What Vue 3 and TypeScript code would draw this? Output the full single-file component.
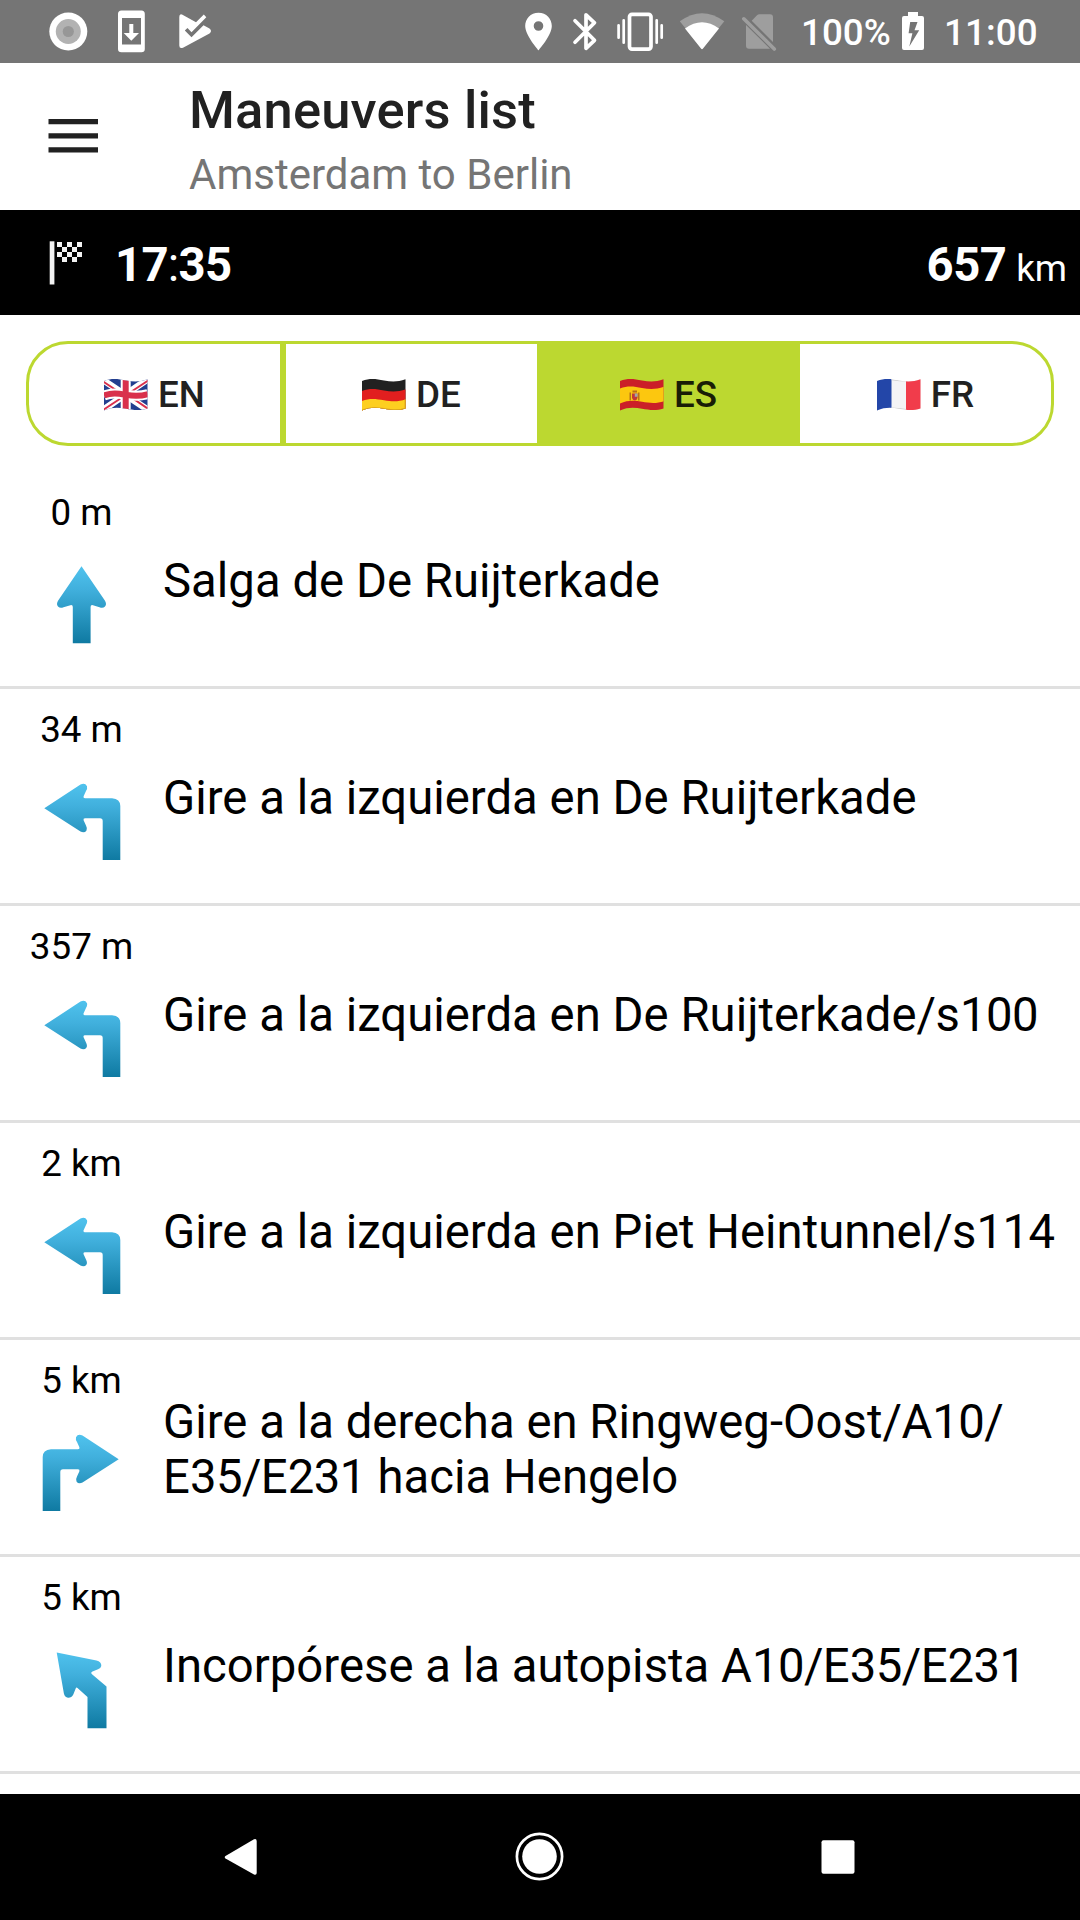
<script setup lang="ts">
type Turn = 'straight' | 'left' | 'right' | 'slight-left'
type Lang = 'EN' | 'DE' | 'ES' | 'FR'

interface Maneuver {
  distance: string
  turn: Turn
  lines: string[]
}

const langs: Lang[] = ['EN', 'DE', 'ES', 'FR']
const active: Lang = 'ES'

// Splits a line so that runs of digits and slashes can be set tighter.
const pieces = (line: string): string[] => line.split(/([0-9/]+)/).filter(Boolean)
const isTight = (piece: string): boolean => /^[0-9/]/.test(piece)

const leftPath =
  'M44.3 119.3L80.5 95.6Q85 93.500 87 97.300Q87.600 99.500 86 102L83.600 107.300Q83 109.300 85 109.300H112Q120.300 110 120.300 117V171H102.700V132Q102.700 129.300 100 129.300H85Q83 129.300 83.600 131.300L86 136.500Q87.600 139.500 86.500 141.500Q84.500 144.500 80.500 142.600Z'

const paths: Record<Turn, string> = {
  straight:
    'M81.500 94.300L105 128.800Q107 132.500 105 134.500Q103 136.700 99.500 135.300L93 133.200Q90.600 132.600 90.600 135V171.300H72.800V135Q72.800 132.600 70.400 133.200L63.500 135.300Q60 136.700 58 134.500Q56 132.500 58 128.800Z',
  left: leftPath,
  right: leftPath,
  'slight-left':
    'M56.700 95.500L96.500 103.500Q101.500 104.800 101.300 109Q100.800 111.300 98 112.300L92.500 114.500Q90.300 115.700 92 117.300L106.500 129.500V171.300H87.500V140L77.500 131Q76.300 129.800 75.500 132L73.300 137.500Q71.500 141 68 140.800Q64.800 140.300 63.900 136.500Z',
}

const maneuvers: Maneuver[] = [
  { distance: '0 m', turn: 'straight', lines: ['Salga de De Ruijterkade'] },
  { distance: '34 m', turn: 'left', lines: ['Gire a la izquierda en De Ruijterkade'] },
  { distance: '357 m', turn: 'left', lines: ['Gire a la izquierda en De Ruijterkade/s100'] },
  { distance: '2 km', turn: 'left', lines: ['Gire a la izquierda en Piet Heintunnel/s114'] },
  { distance: '5 km', turn: 'right', lines: ['Gire a la derecha en Ringweg-Oost/A10/', 'E35/E231 hacia Hengelo'] },
  { distance: '5 km', turn: 'slight-left', lines: ['Incorpórese a la autopista A10/E35/E231'] },
]
</script>

<template>
  <div class="screen">
    <svg class="defs" width="0" height="0">
      <defs>
        <linearGradient id="arrow" gradientUnits="userSpaceOnUse" x1="0" y1="94" x2="0" y2="171">
          <stop offset="0" stop-color="#50c3ee" />
          <stop offset="0.3" stop-color="#41b0dd" />
          <stop offset="1" stop-color="#0f7aa2" />
        </linearGradient>
        <clipPath id="wave">
          <path d="M0 2C8 -1 14 0 22 1.500S36 3 43.500 0.300V29.500C36 32 29 31 22 29.800S8 28 0 31.500Z" />
        </clipPath>
      </defs>
    </svg>

    <header class="status">
      <div class="status-left">
        <svg width="40" height="44" viewBox="48 10 40 44">
          <circle cx="68.300" cy="31.500" r="19" fill="#fff" />
          <circle cx="68.300" cy="31.500" r="12.500" fill="#b2b2b2" />
          <circle cx="68.300" cy="31.500" r="5.600" fill="#979797" />
        </svg>
        <svg width="28" height="44" viewBox="117 10 28 44">
          <path fill="#fff" fill-rule="evenodd" d="M121.500 10.500H141.500Q144.800 10.500 144.800 14V49Q144.800 52.300 141.500 52.300H121.500Q118 52.300 118 49V14Q118 10.500 121.500 10.500ZM122 18V44.500H141V18Z" />
          <path fill="#fff" d="M129.300 24H133.300V33H139L131.300 40.700L123.700 33H129.300Z" />
        </svg>
        <svg width="34" height="44" viewBox="178 10 34 44">
          <path fill="#fff" d="M182 14.500L196 22.300L203.800 14.600L206.300 17.200L191.500 32.200L187.500 28L184.800 30.600L191.500 37.300L203.500 25.300L209.500 28.600Q212.500 31 209.500 33.400L183 47.700Q179.300 49 179.300 45.500V17Q179.300 13.500 182 14.500Z" />
        </svg>
      </div>
      <div class="status-right">
        <svg width="27" height="40" viewBox="525 12 27 40">
          <path fill="#fff" fill-rule="evenodd" d="M538.500 12.700C530.500 12.700 525.200 18.700 525.200 26C525.200 35.500 538.500 50.300 538.500 50.300S551.800 35.500 551.800 26C551.800 18.700 546.500 12.700 538.500 12.700ZM538.500 21.200A4.800 4.800 0 1 1 538.500 30.800A4.800 4.800 0 1 1 538.500 21.200Z" />
        </svg>
        <svg class="bt" width="26" height="40" viewBox="572 12 26 40">
          <path fill="none" stroke="#fff" stroke-width="3.700" stroke-linejoin="round" stroke-linecap="round" d="M575 20.800L594.500 40.300L586 48.300V14.800L594.500 22.800L575 42.300" />
        </svg>
        <svg class="vib" width="48" height="40" viewBox="616 12 48 40">
          <rect x="629.500" y="14.300" width="21.500" height="34.800" rx="2.500" fill="none" stroke="#fff" stroke-width="3.700" />
          <path stroke="#fff" stroke-width="2.700" stroke-linecap="round" d="M618.600 25.300V37.700M623.700 20.300V42.700M656.700 20.300V42.700M661.700 25.300V37.700" />
        </svg>
        <svg class="wifi" width="46" height="40" viewBox="679 12 46 40">
          <path fill="#9e9e9e" d="M679.800 21.300Q702 5 724.300 21.300L702 49.300Z" />
          <path fill="#fff" d="M685 28.500Q702 16 719 28.500L703 48.500Q702 49.800 701 48.500Z" />
        </svg>
        <svg class="sim" width="36" height="40" viewBox="741 12 36 40">
          <path fill="#9e9e9e" d="M759.500 14.300H770Q773 14.300 773 17.300V42L751.700 20.800L757 15.300Q758 14.300 759.500 14.300ZM746 25L770 48.700H749Q746 48.700 746 45.700Z" />
          <path stroke="#9e9e9e" stroke-width="3.600" stroke-linecap="round" d="M743.800 18.800L774.300 49" />
        </svg>
        <span class="pct">100%</span>
        <svg class="bat" width="22" height="40" viewBox="902 12 22 40">
          <path fill="#fff" fill-rule="evenodd" d="M908 12H918V16H922Q924 16 924 18V48Q924 50 922 50H904Q902 50 902 48V18Q902 16 904 16H908ZM910.200 22L908.600 33.300H912.400L909.300 46.500L919.200 30.300H914.500L917.500 22Z" />
        </svg>
        <span class="clock">11:00</span>
      </div>
    </header>

    <div class="toolbar">
      <svg class="menu" width="50" height="36" viewBox="0 0 50 36">
        <path fill="#212121" d="M0.500 1H50V6.300H0.500ZM0.500 15.200H50V20.500H0.500ZM0.500 29.300H50V34.600H0.500Z" />
      </svg>
      <div class="titles">
        <h1>Maneuvers list</h1>
        <p>Amsterdam to Berlin</p>
      </div>
    </div>

    <div class="summary">
      <svg class="finish" width="36" height="46" viewBox="48 240 36 46">
        <rect x="49.700" y="241.300" width="4.700" height="43.200" fill="#f2f2f2" />
        <path fill="#f2f2f2" d="M57 242h5v5h-5zM67 242h5v5h-5zM77 242h5v5h-5zM62 247h5v5h-5zM72 247h5v5h-5zM57 252h5v5h-5zM67 252h5v5h-5zM77 252h5v5h-5zM62 257h5v5h-5zM72 257h5v5h-5z" />
      </svg>
      <span class="eta"><b>17</b>:<b>35</b></span>
      <span class="total"><b>657</b> <small>km</small></span>
    </div>

    <nav class="tabs">
      <button v-for="l in langs" :key="l" class="tab" :class="{ active: l === active }">
        <svg class="flag" width="44" height="32" viewBox="0 0 44 32">
          <g clip-path="url(#wave)">
            <template v-if="l === 'EN'">
              <rect width="44" height="32" fill="#233f8f" />
              <path stroke="#fff" stroke-width="6.500" d="M-1 1L44 31M-1 31L44 0" />
              <path stroke="#d9304c" stroke-width="2" d="M-1 2.500L18 15M-1 31L18 18.500M26 17.500L45 30.500M26 13.500L45 1" />
              <path stroke="#fff" stroke-width="10" fill="none" d="M21.700 -1V33M0 16.500C8 13.500 14 14.500 22 15.800S36 17.500 44 15" />
              <path stroke="#d9304c" stroke-width="6" fill="none" d="M21.700 -1V33M0 16.500C8 13.500 14 14.500 22 15.800S36 17.500 44 15" />
            </template>
            <template v-else-if="l === 'DE'">
              <rect width="44" height="32" fill="#212121" />
              <path fill="#e11f1f" d="M0 12C8 9 14 10 22 11.500S36 13 44 10.300V32H0Z" />
              <path fill="#fdcf20" d="M0 22C8 19 14 20 22 21.300S36 23 44 20.300V32H0Z" />
              <path fill="none" stroke="#d6a51e" stroke-width="1.400" d="M0 31.300C8 28 14 28.600 22 29.800S36 32 43.300 29.500V20.500" />
            </template>
            <template v-else-if="l === 'ES'">
              <rect width="44" height="32" fill="#cb1f28" />
              <path fill="#fcc70f" d="M0 9.500C8 6.500 14 7.500 22 9S36 10.500 44 7.800V22.300C36 25 29 24 22 22.800S8 21 0 24.500Z" />
              <path fill="#b5701d" d="M9.500 13.500h1.500v8h-1.500zM18 13.500h1.500v8H18zM12.500 11.500h4.500v2h-4.500z" />
              <path fill="#c1393b" d="M12 14.500h5.500v4q-.5 3-2.700 3t-2.800-3z" />
              <path fill="#a0a9ad" d="M14.800 14.500h2.700v3.300h-2.700z" />
            </template>
            <template v-else>
              <rect width="44" height="32" fill="#f4f4f6" />
              <rect width="14.500" height="32" fill="#2346a8" />
              <rect x="29" width="15" height="32" fill="#f13c4b" />
              <path fill="none" stroke="#ccc" stroke-width="1" d="M14.500 0.700L22 1.700L29 2M14.500 29L22 29.600L29 30.500" />
            </template>
          </g>
        </svg>
        <span>{{ l }}</span>
      </button>
    </nav>

    <main class="list">
      <article v-for="(m, i) in maneuvers" :key="i" class="row">
        <div class="lead">
          <div class="distance">{{ m.distance }}</div>
          <svg class="arrow" :class="{ flip: m.turn === 'right' }" width="163" height="90" viewBox="0 90 163 90">
            <path fill="url(#arrow)" :d="paths[m.turn]" />
          </svg>
        </div>
        <div class="text">
          <div v-for="line in m.lines" :key="line"><span v-for="(p, k) in pieces(line)" :key="k" :class="{ tight: isTight(p) }">{{ p }}</span></div>
        </div>
      </article>
    </main>

    <footer class="navbar">
      <svg width="50" height="50" viewBox="0 0 50 50">
        <path fill="#fff" d="M9.500 24L38 7.300Q40.500 6.300 40.700 9V41Q40.500 43.500 38 42.500L9.500 26.500Q8 25.200 9.500 24Z" />
      </svg>
      <svg width="50" height="50" viewBox="0 0 50 50">
        <circle cx="24.500" cy="24.500" r="22.600" fill="none" stroke="#fff" stroke-width="2.700" />
        <circle cx="24.500" cy="24.500" r="17.300" fill="#fff" />
      </svg>
      <svg width="50" height="50" viewBox="0 0 50 50">
        <rect x="7.500" y="8.200" width="33" height="33.500" rx="2" fill="#fff" />
      </svg>
    </footer>
  </div>
</template>

<style>
body {
  margin: 0;
  background: #fff;
}
</style>

<style scoped>
.screen {
  width: 1080px;
  height: 1920px;
  display: flex;
  flex-direction: column;
  overflow: hidden;
  background: #fff;
  font-family: Roboto, 'Noto Sans', sans-serif;
  color: #000;
}
svg {
  display: block;
  flex: none;
}
.defs {
  position: absolute;
}
.status {
  height: 63px;
  flex: none;
  box-sizing: border-box;
  padding: 10px 42px 0 48px;
  display: flex;
  justify-content: space-between;
  background: #757575;
  color: #fff;
  font-size: 36.75px;
  font-weight: 500;
  line-height: 43px;
}
.status-left {
  display: flex;
  gap: 29px;
}
.status-left svg:last-child {
  margin-left: 4px;
}
.status-right {
  display: flex;
  padding-top: 2px;
  width: 513px;
}
.bt {
  margin-left: 20px;
}
.vib {
  margin-left: 18px;
}
.wifi {
  margin-left: 15px;
}
.sim {
  margin-left: 16px;
}
.pct,
.clock {
  margin-top: -1px;
}
.pct {
  width: 101px;
  margin-left: 24px;
}
.clock {
  margin-left: 20px;
  letter-spacing: 0.1px;
}
.toolbar {
  height: 147px;
  flex: none;
  display: flex;
}
.menu {
  margin: 55px 0 0 48px;
}
.titles {
  margin-left: 91px;
}
h1 {
  margin: 16px 0 0;
  font-size: 52.5px;
  font-weight: 500;
  line-height: 62px;
  letter-spacing: 0.17px;
  color: #212121;
}
.titles p {
  margin: 9px 0 0;
  font-size: 42px;
  line-height: 50px;
  color: #757575;
}
.summary {
  height: 105px;
  flex: none;
  box-sizing: border-box;
  padding: 27px 13px 0 48px;
  display: flex;
  background: #000;
  color: #fff;
  font-size: 47.25px;
  line-height: 56px;
}
.finish {
  margin-top: 3px;
}
.eta {
  margin-left: 31px;
  letter-spacing: -0.7px;
}
.total {
  margin-left: auto;
  word-spacing: -2px;
}
.total b {
  letter-spacing: -0.5px;
}
small {
  font-size: 36.75px;
}
.tabs {
  height: 105px;
  flex: none;
  margin: 26px 26px 0;
  display: flex;
}
.tab {
  flex: 1;
  margin: 0;
  padding: 2px 0 0;
  border: 3px solid #bcd830;
  background: #fff;
  display: flex;
  align-items: center;
  justify-content: center;
  gap: 10px;
  font-family: inherit;
  font-size: 36.75px;
  font-weight: 500;
  line-height: 43px;
  color: #212121;
}
.tab:first-child {
  border-radius: 42px 0 0 42px;
}
.tab:last-child {
  border-radius: 0 42px 42px 0;
}
.tab.active {
  background: #bcd830;
  color: #191d06;
}
.flag {
  margin-top: 1px;
}
.list {
  height: 1322px;
  margin-top: 26px;
  flex: none;
}
.row {
  height: 214px;
  border-bottom: 3px solid #e0e0e0;
  display: flex;
}
.lead {
  width: 163px;
  flex: none;
}
.distance {
  margin-top: 19px;
  font-size: 36.75px;
  line-height: 43px;
  text-align: center;
}
.arrow {
  margin-top: 28px;
}
.flip {
  transform: scaleX(-1);
}
.text {
  height: 220px;
  display: flex;
  flex-direction: column;
  justify-content: center;
  font-size: 47.25px;
  line-height: 55.4px;
  letter-spacing: 0.03px;
  white-space: pre;
}
.tight {
  letter-spacing: -0.55px;
}
.navbar {
  flex: 1;
  display: flex;
  justify-content: center;
  gap: 249px;
  padding-top: 38px;
  background: #000;
}
</style>
